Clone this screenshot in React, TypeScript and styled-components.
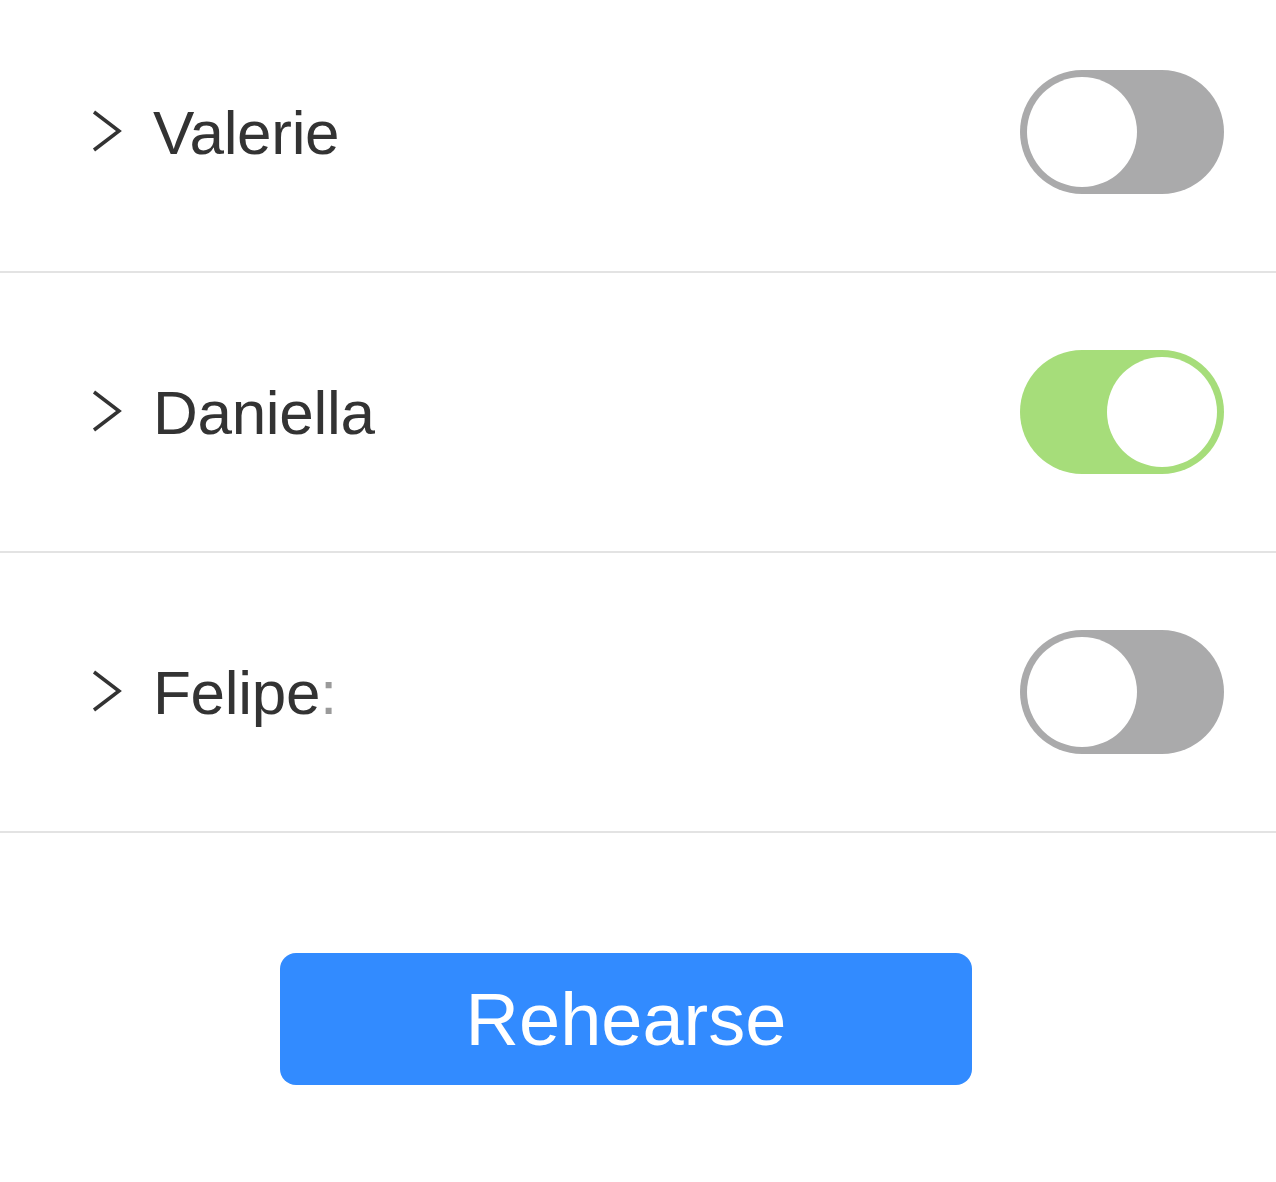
import React, { useState } from "react";
import styled, { createGlobalStyle } from "styled-components";

const GlobalStyle = createGlobalStyle`
  body {
    margin: 0;
    background: #ffffff;
    font-family: "Liberation Sans", Arial, Helvetica, sans-serif;
  }
`;

const Page = styled.div`
  background: #fff;
`;

const List = styled.div`
  margin-top: -7px;
`;

const Row = styled.div`
  height: 278px;
  display: flex;
  align-items: center;
  padding: 0 52px 0 92px;
  border-bottom: 2px solid #e3e3e3;
`;

const Label = styled.div`
  flex: 1;
  display: flex;
  align-items: center;
  gap: 31px;
  color: #333333;
  font-size: 62px;
  letter-spacing: -0.3px;
`;

const Chevron = styled.svg`
  width: 30px;
  height: 44px;
  flex-shrink: 0;
`;

const Colon = styled.span`
  color: #9a9a9a;
`;

const Track = styled.button<{ $on: boolean }>`
  width: 204px;
  height: 124px;
  border: none;
  border-radius: 62px;
  padding: 7px;
  cursor: pointer;
  display: flex;
  justify-content: ${(p) => (p.$on ? "flex-end" : "flex-start")};
  background: ${(p) => (p.$on ? "#a6dd7a" : "#aaaaab")};
`;

const Knob = styled.span`
  width: 110px;
  height: 110px;
  border-radius: 50%;
  background: #ffffff;
`;

const Footer = styled.div`
  display: flex;
  justify-content: center;
  padding: 120px 24px 0 0;
`;

const RehearseButton = styled.button`
  width: 692px;
  height: 132px;
  border: none;
  border-radius: 16px;
  background: #328bff;
  color: #ffffff;
  font-family: "Liberation Sans", Arial, Helvetica, sans-serif;
  font-size: 74px;
  padding: 0;
  cursor: pointer;
`;

const people = [
  { name: "Valerie", on: false },
  { name: "Daniella", on: true },
  { name: "Felipe", on: false, colon: true },
];

export default function App() {
  const [state, setState] = useState(people.map((p) => p.on));

  return (
    <Page>
      <GlobalStyle />
      <List>
        {people.map((p, i) => (
          <Row key={p.name}>
            <Label>
              <Chevron viewBox="0 0 30 44">
                <polyline
                  points="2,2 27,21 2,40"
                  fill="none"
                  stroke="#333"
                  strokeWidth="3.5"
                  strokeLinejoin="miter"
                />
              </Chevron>
              <span>
                {p.name}
                {p.colon && <Colon>:</Colon>}
              </span>
            </Label>
            <Track
              $on={state[i]}
              onClick={() => setState((s) => s.map((v, j) => (j === i ? !v : v)))}
            >
              <Knob />
            </Track>
          </Row>
        ))}
      </List>
      <Footer>
        <RehearseButton>Rehearse</RehearseButton>
      </Footer>
    </Page>
  );
}
